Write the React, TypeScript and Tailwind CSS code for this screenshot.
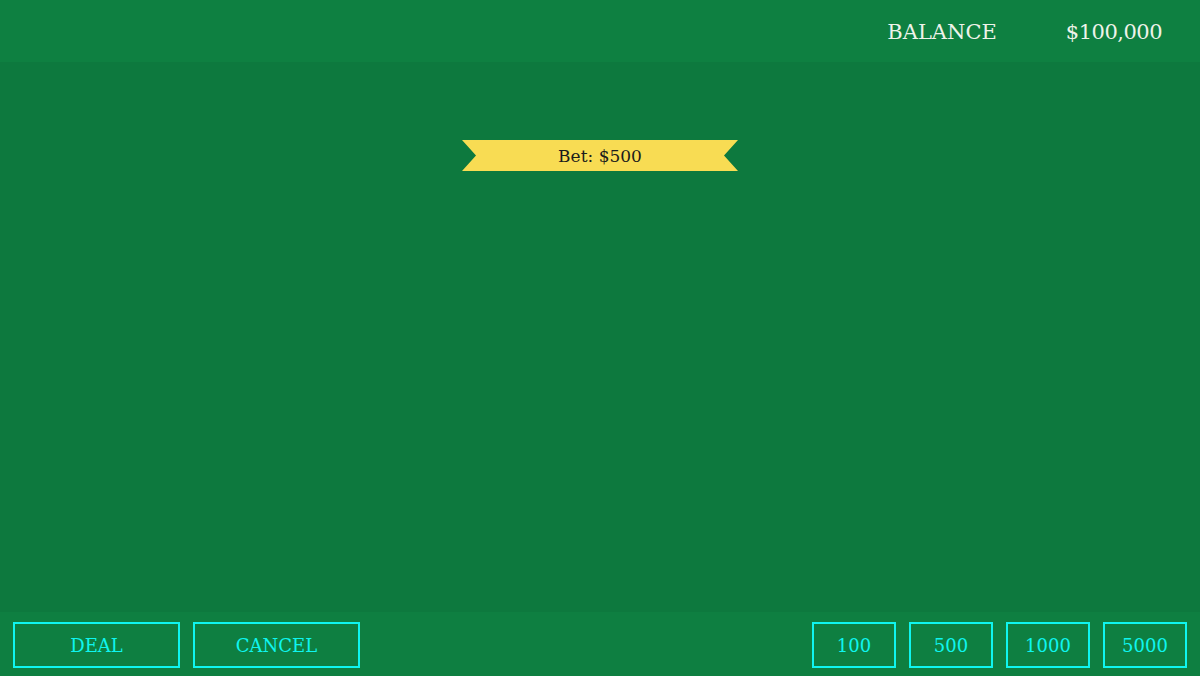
import React from 'react';

const chips = [100, 500, 1000, 5000];

export default function App() {
  return (
    <div className="flex h-[676px] w-[1200px] flex-col bg-[#0d793e] font-['DejaVu_Serif',serif]">
      <header className="flex h-[62px] items-center justify-end gap-[69px] bg-[#0e8041] pr-[38px] pt-[4px] text-[21px] text-[#eef3ea]">
        <span>BALANCE</span>
        <span className="tracking-[-0.5px]">$100,000</span>
      </header>

      <main className="flex flex-1 flex-col items-center pt-[78px]">
        <div className="flex h-[31px] w-[276px] items-center justify-center bg-[#f8dc53] pt-[2px] text-[17px] text-[#1c1c1c] [clip-path:polygon(0_0,100%_0,calc(100%-14px)_50%,100%_100%,0_100%,14px_50%)]">
          Bet: $500
        </div>
      </main>

      <footer className="flex h-[64px] items-start justify-between bg-[#0e7f41] px-[13px] pt-[10px]">
        <div className="flex gap-[13px]">
          <button className="h-[46px] w-[167px] border-2 border-[#0ff5ef] text-[18px] text-[#0ff5ef]">DEAL</button>
          <button className="h-[46px] w-[167px] border-2 border-[#0ff5ef] text-[18px] text-[#0ff5ef]">CANCEL</button>
        </div>
        <div className="flex gap-[13px]">
          {chips.map((c) => (
            <button key={c} className="h-[46px] w-[84px] border-2 border-[#0ff5ef] text-[18px] text-[#0ff5ef]">
              {c}
            </button>
          ))}
        </div>
      </footer>
    </div>
  );
}
